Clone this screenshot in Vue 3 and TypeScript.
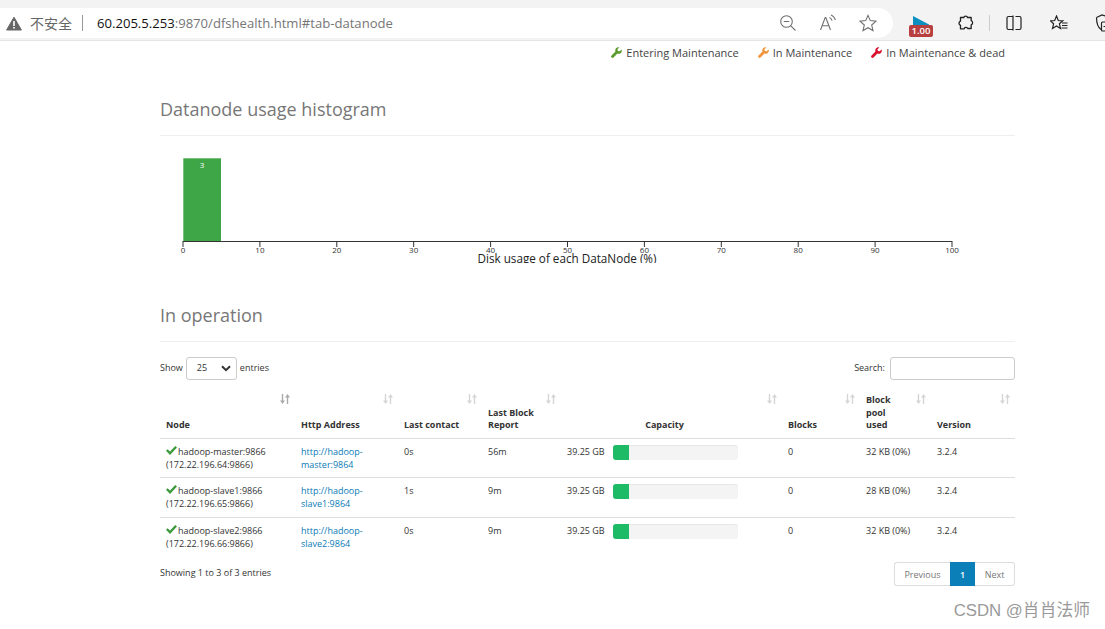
<script setup lang="ts">
interface Row { name: string; ip: string; http1: string; http2: string; contact: string; report: string; pool: string }
const rows: Row[] = [
  { name: 'hadoop-master:9866', ip: '(172.22.196.64:9866)', http1: 'http://hadoop-', http2: 'master:9864', contact: '0s', report: '56m', pool: '32 KB (0%)' },
  { name: 'hadoop-slave1:9866', ip: '(172.22.196.65:9866)', http1: 'http://hadoop-', http2: 'slave1:9864', contact: '1s', report: '9m', pool: '28 KB (0%)' },
  { name: 'hadoop-slave2:9866', ip: '(172.22.196.66:9866)', http1: 'http://hadoop-', http2: 'slave2:9864', contact: '0s', report: '9m', pool: '32 KB (0%)' },
]
const ticks = Array.from({ length: 11 }, (_, i) => i * 10)
const legend = [
  { label: 'Entering Maintenance', color: '#5a9a2a' },
  { label: 'In Maintenance', color: '#f0963c' },
  { label: 'In Maintenance & dead', color: '#d9102c' },
]
const wrench = 'M13.5 3.2 11 5.5 8.8 5 8.2 2.8 10.6.5A4 4 0 0 0 5.7 5.8L.7 10.8A1.7 1.7 0 0 0 3.2 13.3L8.2 8.3A4 4 0 0 0 13.5 3.2z'
const headers = ['Node', 'Http Address', 'Last contact', 'Last Block Report', 'Capacity', 'Blocks', 'Block pool used', 'Version']
</script>

<template>
  <div class="page">
    <header class="chrome">
      <div class="address">
        <svg class="warn" width="16" height="15" viewBox="0 0 16 15"><path d="M8 1.2 15.400 14H.6z" fill="#666" stroke="#666" stroke-width="1" stroke-linejoin="round"/><rect x="7.200" y="5" width="1.600" height="5" fill="#fff"/><rect x="7.200" y="11" width="1.600" height="1.600" fill="#fff"/></svg>
        <span class="insecure">不安全</span>
        <span class="divider"></span>
        <span class="url"><b>60.205.5.253</b>:9870/dfshealth.html#tab-datanode</span>
        <span class="addr-icons">
          <svg width="18" height="18" viewBox="0 0 18 18" fill="none" stroke="#707070" stroke-width="1.1"><circle cx="7.500" cy="7.500" r="5.800"/><path d="M4.800 7.500h5.400M11.800 11.800 16.500 16.500"/></svg>
          <svg width="18" height="18" viewBox="0 0 18 18" fill="none" stroke="#707070" stroke-width="1.1"><path d="M1.500 16 6.200 3.500h.6L11.500 16M3.200 11.800h6.600M10.500 3.500c1.500.7 2.200 1.800 2.600 3.200M12 1c2.300 1 3.800 2.800 4.300 5"/></svg>
          <svg width="18" height="18" viewBox="0 0 18 18" fill="none" stroke="#707070" stroke-width="1.1"><path d="M9 1.400 11.300 6.600 17 7.200 12.700 11 14 16.600 9 13.700 4 16.600 5.300 11 1 7.200 6.700 6.600z"/></svg>
        </span>
      </div>
      <div class="tools">
        <div class="ext">
          <svg width="16" height="10" viewBox="0 0 16 10"><path d="M0 0 16 8.500V10H0z" fill="#0a8fc0"/></svg>
          <span class="badge">1.00</span>
        </div>
        <svg class="puzzle" width="16" height="16" viewBox="0 0 18 18" fill="none" stroke="#222" stroke-width="1.500"><path d="M6.500 2.800C7 .8 10.300.8 10.800 2.800H14.800V6.300C17 6.800 17 10.500 14.800 11V15.200H11C10.300 13.200 7.200 13.600 6.800 15.600H2.800V11.500C.6 11 .6 7.500 2.800 6.800V2.800Z" stroke-linejoin="round"/></svg>
        <span class="tool-sep"></span>
        <svg class="split" width="16" height="16" viewBox="0 0 16 16" fill="none" stroke="#222" stroke-width="1.200"><path d="M7 1.500H2.500A1.500 1.500 0 0 0 1 3V13A1.500 1.500 0 0 0 2.500 14.500H7zM7 .5V15.500M9.500 1.500H13.500A1.500 1.500 0 0 1 15 3V13A1.500 1.500 0 0 1 13.500 14.500H9.500"/></svg>
        <svg class="favs" width="18" height="16" viewBox="0 0 18 16" fill="none" stroke="#222" stroke-width="1.200"><path d="M6.500 1 8.300 5.500 12.800 5.800 9.400 8.800 10.500 13.500 6.500 11 2.500 13.500 3.600 8.800.3 5.800 4.700 5.500zM12 8H17.500M12 10.500H17.500M11.500 13H17.500"/></svg>
        <svg class="shield" width="16" height="18" viewBox="0 0 16 18" fill="none" stroke="#222" stroke-width="1.200"><path d="M1.500 3.500 7 1 12 2.500V8M1.500 3.500C1.500 9 2.500 13 6 15.500"/><rect x="6.500" y="8" width="9" height="9" rx="1"/><path d="M11 10V15M8.500 12.500H13.500"/></svg>
      </div>
    </header>

    <div class="legend">
      <span v-for="item in legend" :key="item.label" class="legend-item">
        <svg width="11" height="11" viewBox="0 0 14 14"><path :d="wrench" :fill="item.color"/></svg>
        {{ item.label }}
      </span>
    </div>

    <main class="container">
      <h2 class="section-title first">Datanode usage histogram</h2>
      <svg class="chart" width="855" height="107" viewBox="0 0 855 107">
        <rect x="23.300" y="2.300" width="37.700" height="83" fill="#3fa648"/>
        <text x="42" y="12" class="bar-label">3</text>
        <line x1="23" y1="85.500" x2="792" y2="85.500" stroke="#333" stroke-width="1.200"/>
        <g v-for="t in ticks" :key="t">
          <line :x1="23 + t * 7.69" y1="85" :x2="23 + t * 7.69" y2="91" stroke="#333" stroke-width="1"/>
          <text :x="23 + t * 7.69" y="97" class="tick">{{ t }}</text>
        </g>
        <text x="407" y="107" class="axis-title">Disk usage of each DataNode (%)</text>
      </svg>

      <h2 class="section-title second">In operation</h2>

      <div class="controls">
        <label class="length">Show
          <span class="select"><span>25</span>
            <svg width="10" height="7" viewBox="0 0 10 7" fill="none" stroke="#333" stroke-width="2"><path d="M1 1.200 5 5.200 9 1.200"/></svg>
          </span>
          entries</label>
        <label class="search">Search: <span class="search-box"></span></label>
      </div>

      <table class="table">
        <colgroup>
          <col class="c-node" /><col class="c-http" /><col class="c-contact" /><col class="c-report" />
          <col class="c-capacity" /><col class="c-blocks" /><col class="c-pool" /><col class="c-version" />
        </colgroup>
        <thead>
          <tr>
            <th v-for="(h, i) in headers" :key="h" :class="{ center: i === 4, narrow: i === 6 }">
              {{ h }}
              <svg class="sort" :class="{ active: i === 0 }" width="10" height="10" viewBox="0 0 10 10"><path d="M2.500 10 0 6.500H1.800V0H3.200V6.500H5zM7.500 0 10 3.500H8.200V10H6.800V3.500H5z"/></svg>
            </th>
          </tr>
        </thead>
        <tbody>
          <tr v-for="r in rows" :key="r.name">
            <td>
              <svg class="check" width="11" height="9" viewBox="0 0 11 9"><path d="M0 4.800 1.600 3.200 4 5.500 9.300 0 11 1.600 4 9z" fill="#3c9a3c"/></svg>{{ r.name }}<br />{{ r.ip }}
            </td>
            <td><a class="link">{{ r.http1 }}<br />{{ r.http2 }}</a></td>
            <td>{{ r.contact }}</td>
            <td>{{ r.report }}</td>
            <td>
              <div class="capacity">
                <span class="cap-text">39.25 GB</span>
                <span class="progress"><span class="progress-bar" :style="{ width: '13%' }"></span></span>
              </div>
            </td>
            <td>0</td>
            <td>{{ r.pool }}</td>
            <td>3.2.4</td>
          </tr>
        </tbody>
      </table>

      <div class="footer">
        <span>Showing 1 to 3 of 3 entries</span>
        <nav class="pager">
          <span class="page-btn prev">Previous</span>
          <span class="page-btn current">1</span>
          <span class="page-btn next">Next</span>
        </nav>
      </div>
    </main>

    <div class="watermark">CSDN @肖肖法师</div>
  </div>
</template>

<style>
html, body { margin: 0; background: #fff; overflow: hidden; }
</style>

<style scoped>
.page {
  position: relative;
  width: 1105px;
  height: 629px;
  overflow: hidden;
  background: #fff;
  font-family: "Open Sans", "Noto Sans CJK SC", sans-serif;
  color: #333;
  font-size: 9px;
}
.chrome {
  height: 41px;
  box-sizing: border-box;
  background: #f3f3f3;
  border-bottom: 1px solid #e6e6e6;
  padding-top: 8px;
  display: flex;
  align-items: flex-start;
  overflow: hidden;
}
.address {
  flex: none;
  width: 893px;
  height: 30px;
  background: #fff;
  border-radius: 0 15px 15px 0;
  display: flex;
  align-items: center;
  padding-left: 6px;
  box-sizing: border-box;
}
.warn { margin-right: 8px; }
.insecure { font-size: 14px; color: #666; }
.divider { width: 1px; height: 16px; background: #999; margin: 0 14px 0 10px; }
.url { font-size: 13.1px; color: #767676; }
.url b { font-weight: 400; color: #111; }
.addr-icons { margin-left: auto; display: flex; gap: 22px; padding-right: 16px; }
.tools { flex: none; display: flex; align-items: center; height: 30px; }
.ext { position: relative; width: 25px; height: 30px; margin-left: 16px; flex: none; }
.ext svg { position: absolute; left: 4px; top: 8px; }
.badge {
  position: absolute;
  left: 0;
  top: 17px;
  width: 24px;
  height: 12px;
  background: #b83f3f;
  color: #fff;
  border-radius: 2px;
  font-size: 9.5px;
  line-height: 12px;
  text-align: center;
  font-weight: 600;
}
.puzzle { margin-left: 24px; flex: none; }
.tool-sep { width: 1px; height: 16px; background: #ccc; margin: 0 16px 0 15px; flex: none; }
.split { margin-right: 28px; flex: none; }
.favs { margin-right: 27px; flex: none; }
.shield { flex: none; }
.legend {
  display: flex;
  justify-content: flex-end;
  gap: 19px;
  padding: 3px 100px 0 0;
  height: 17px;
  font-size: 11px;
  line-height: 17px;
  color: #444;
}
.legend-item { display: inline-flex; align-items: center; gap: 4px; }
.container { width: 855px; margin-left: 160px; }
.section-title {
  margin: 0;
  font-weight: 400;
  font-size: 18px;
  color: #777;
  line-height: 26px;
  border-bottom: 1px solid #eee;
}
.section-title.first { margin-top: 35px; padding-bottom: 13px; }
.section-title.second { margin-top: 39px; padding-bottom: 13px; }
.chart { display: block; margin-top: 20px; }
.bar-label { font-size: 8px; fill: #fff; text-anchor: middle; }
.tick { font-size: 8px; fill: #333; text-anchor: middle; }
.axis-title { font-size: 11.7px; fill: #222; text-anchor: middle; }
.controls {
  display: flex;
  justify-content: space-between;
  align-items: center;
  margin-top: 14px;
  height: 24px;
}
.length, .search { display: flex; align-items: center; font-size: 9px; line-height: 22px; }
.select {
  width: 51px;
  height: 23px;
  box-sizing: border-box;
  border: 1px solid #ccc;
  border-radius: 3px;
  margin: 0 3px;
  padding: 0 5px 0 10px;
  display: flex;
  align-items: center;
  justify-content: space-between;
}
.search-box {
  width: 125px;
  height: 23px;
  box-sizing: border-box;
  border: 1px solid #ccc;
  border-radius: 3px;
  margin-left: 5px;
}
.table {
  width: 855px;
  table-layout: fixed;
  border-collapse: collapse;
  margin-top: 8px;
  font-size: 9px;
  line-height: 13px;
}
.c-node { width: 135px; }
.c-http { width: 103px; }
.c-contact { width: 84px; }
.c-report { width: 79px; }
.c-capacity { width: 221px; }
.c-blocks { width: 78px; }
.c-pool { width: 71px; }
.c-version { width: 84px; }
.table th {
  position: relative;
  box-sizing: border-box;
  text-align: left;
  vertical-align: bottom;
  font-weight: 700;
  line-height: 12.5px;
  padding: 6px 20px 6px 6px;
  border-bottom: 1px solid #ddd;
  color: #333;
}
.table th.center { text-align: center; }
.table th.narrow { padding-right: 30px; }
.sort { position: absolute; right: 5px; top: 6px; fill: #d5d5d5; }
.sort.active { fill: #aaa; }
.table td {
  box-sizing: border-box;
  vertical-align: top;
  padding: 6px 6px 6.5px;
  border-bottom: 1px solid #ddd;
  color: #333;
}
.table tbody tr:last-child td { border-bottom: none; }
.check { margin-right: 1px; }
.link { color: #0a7bb5; }
.capacity { display: flex; align-items: flex-start; }
.cap-text { width: 46px; }
.progress {
  display: block;
  width: 125px;
  height: 15px;
  background: #f4f4f4;
  border-radius: 3px;
  overflow: hidden;
  box-shadow: inset 0 1px 1px rgba(0, 0, 0, 0.06);
}
.progress-bar { display: block; height: 100%; background: #1dbb66; }
.footer {
  display: flex;
  justify-content: space-between;
  align-items: flex-start;
  margin-top: 6px;
}
.footer > span { padding-top: 4px; }
.pager { display: flex; height: 24px; font-size: 9px; }
.page-btn {
  display: flex;
  align-items: center;
  justify-content: center;
  box-sizing: border-box;
  border: 1px solid #ddd;
  color: #777;
}
.prev { width: 56px; border-radius: 3px 0 0 3px; border-right: none; }
.current { width: 25px; background: #0a7fb8; border-color: #0a7fb8; color: #fff; font-weight: 600; }
.next { width: 40px; border-radius: 0 3px 3px 0; border-left: none; }
.watermark {
  position: absolute;
  right: 15px;
  top: 601px;
  font-family: "Liberation Sans", "Noto Sans CJK SC", sans-serif;
  font-size: 16.8px;
  line-height: 20px;
  color: #9a9a9a;
}
</style>
